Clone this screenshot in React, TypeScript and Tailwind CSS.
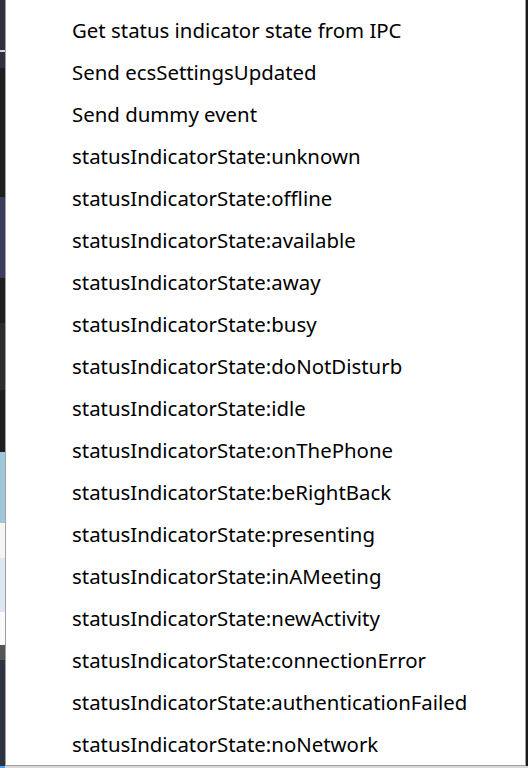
const items = [
  'Get status indicator state from IPC',
  'Send ecsSettingsUpdated',
  'Send dummy event',
  'statusIndicatorState:unknown',
  'statusIndicatorState:offline',
  'statusIndicatorState:available',
  'statusIndicatorState:away',
  'statusIndicatorState:busy',
  'statusIndicatorState:doNotDisturb',
  'statusIndicatorState:idle',
  'statusIndicatorState:onThePhone',
  'statusIndicatorState:beRightBack',
  'statusIndicatorState:presenting',
  'statusIndicatorState:inAMeeting',
  'statusIndicatorState:newActivity',
  'statusIndicatorState:connectionError',
  'statusIndicatorState:authenticationFailed',
  'statusIndicatorState:noNetwork',
]

export default function App() {
  return (
    <div className="w-[528px] h-[768px] overflow-hidden flex flex-col bg-[#1e1e1e]">
      <div className="flex flex-1">
        {/* window content peeking out on the left */}
        <div className="w-[5px] flex flex-col">
          <div className="h-[50px] bg-[#2f3140]" />
          <div className="h-[2px] bg-[#d0d0d8]" />
          <div className="h-[16px] bg-[#2f3140]" />
          <div className="h-[129px] bg-[#1f1f1f]" />
          <div className="h-[81px] bg-[#3b3d5c]" />
          <div className="h-[45px] bg-[#1f1f1f]" />
          <div className="h-[67px] bg-[#2d2d2d]" />
          <div className="h-[62px] bg-[#1f1f1f]" />
          <div className="h-[71px] bg-[#9fc7d9]" />
          <div className="h-[35px] bg-[#f5f5f5]" />
          <div className="h-[54px] bg-[#dde6f2]" />
          <div className="h-[33px] bg-[#fafafa]" />
          <div className="h-[15px] bg-[#555555]" />
          <div className="flex-1 bg-[#2d3340]" />
        </div>
        <div className="w-[521px] bg-white border-l border-r border-b border-[#a0a0a0] pt-[9px] font-['Noto_Sans',sans-serif] text-[20.4px] text-black">
          {items.map((t) => (
            <div key={t} className="h-[42px] flex items-center pl-[66px]">
              {t}
            </div>
          ))}
        </div>
        <div className="w-[2px] bg-[#1a1a1a]" />
      </div>
      <div className="h-[2px] flex">
        <div className="w-[5px] bg-[#4da3ff]" />
        <div className="flex-1 bg-[#d8d8d8]" />
      </div>
    </div>
  )
}
